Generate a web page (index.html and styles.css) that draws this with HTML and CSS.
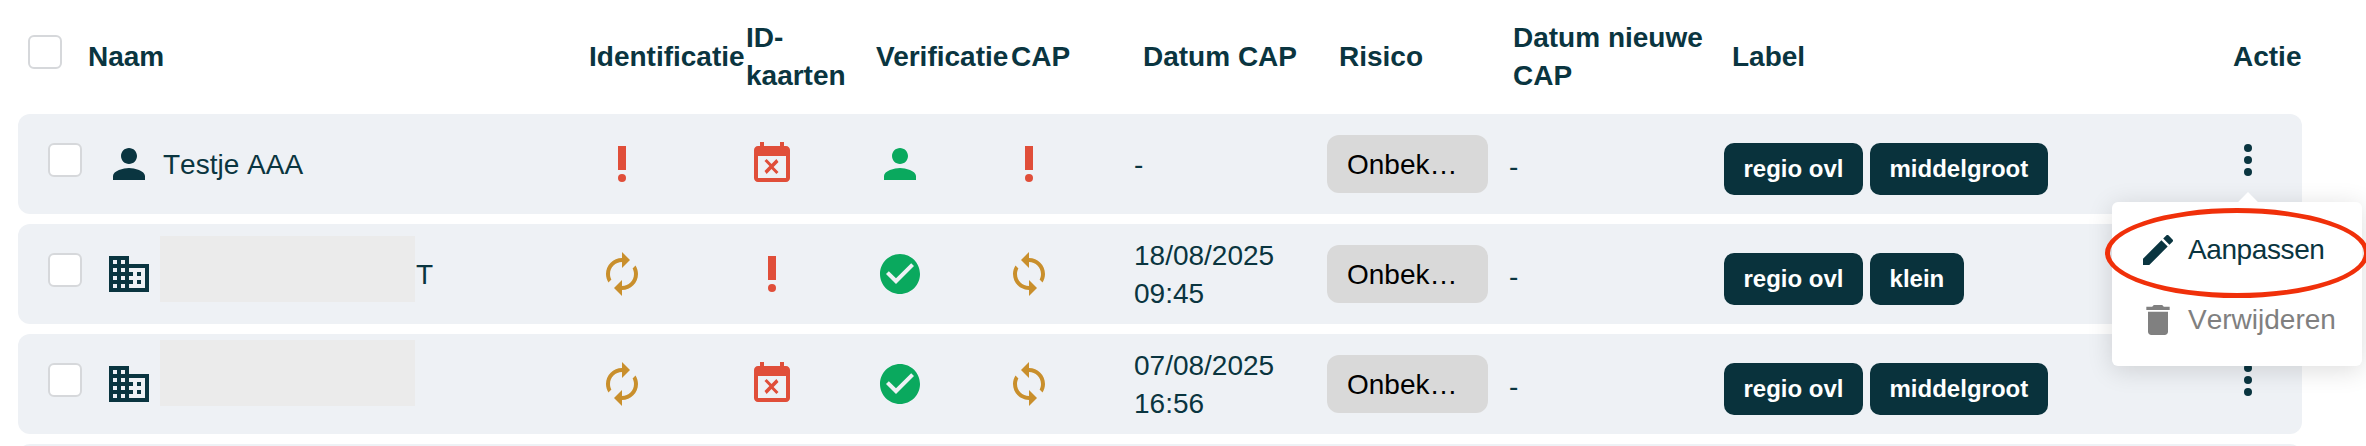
FILE: index.html
```html
<!DOCTYPE html>
<html lang="nl">
<head>
    <meta charset="UTF-8">
    <meta name="viewport" content="width=device-width, initial-scale=1.0">
    <title>Klanten</title>
    <link rel="stylesheet" href="styles.css">
</head>
<body>

    <!-- Material iconen, hergebruikt in de rijen -->
    <svg class="defs" aria-hidden="true">
        <symbol id="i-person" viewBox="0 0 24 24"><path d="M12 12c2.21 0 4-1.79 4-4s-1.79-4-4-4-4 1.79-4 4 1.79 4 4 4zm0 2c-2.67 0-8 1.34-8 4v2h16v-2c0-2.66-5.33-4-8-4z"/></symbol>
        <symbol id="i-domain" viewBox="0 0 24 24"><path d="M12 7V3H2v18h20V7H12zM6 19H4v-2h2v2zm0-4H4v-2h2v2zm0-4H4V9h2v2zm0-4H4V5h2v2zm4 12H8v-2h2v2zm0-4H8v-2h2v2zm0-4H8V9h2v2zm0-4H8V5h2v2zm10 12h-8v-2h2v-2h-2v-2h2v-2h-2V9h8v10zm-2-8h-2v2h2v-2zm0 4h-2v2h2v-2z"/></symbol>
        <symbol id="i-priority" viewBox="0 0 24 24"><circle cx="12" cy="19" r="2"/><path d="M10 3h4v12h-4z"/></symbol>
        <symbol id="i-busy" viewBox="0 0 24 24"><path d="M9.31 17l2.44-2.44L14.19 17l1.06-1.06-2.44-2.44 2.44-2.44L14.19 9.5l-2.44 2.44L9.31 9.5l-1.06 1.06 2.44 2.44-2.44 2.44L9.31 17zM19 3h-1V1h-2v2H8V1H6v2H5c-1.11 0-1.99.9-1.99 2L3 19c0 1.1.89 2 2 2h14c1.1 0 2-.9 2-2V5c0-1.1-.9-2-2-2zm0 16H5V8h14v11z"/></symbol>
        <symbol id="i-sync" viewBox="0 0 24 24"><path d="M12 4V1L8 5l4 4V6c3.31 0 6 2.69 6 6 0 1.01-.25 1.97-.7 2.8l1.46 1.46C19.54 15.03 20 13.57 20 12c0-4.42-3.58-8-8-8zm0 14c-3.31 0-6-2.69-6-6 0-1.01.25-1.97.7-2.8L5.24 7.74C4.46 8.97 4 10.43 4 12c0 4.42 3.58 8 8 8v3l4-4-4-4v3z"/></symbol>
        <symbol id="i-check" viewBox="0 0 24 24"><path d="M12 2C6.48 2 2 6.48 2 12s4.48 10 10 10 10-4.48 10-10S17.52 2 12 2zm-2 15l-5-5 1.41-1.41L10 14.17l7.59-7.59L19 8l-9 9z"/></symbol>
        <symbol id="i-more" viewBox="0 0 24 24"><circle cx="12" cy="6" r="2"/><circle cx="12" cy="12" r="2"/><circle cx="12" cy="18" r="2"/></symbol>
        <symbol id="i-edit" viewBox="0 0 24 24"><path d="M3 17.25V21h3.75L17.81 9.94l-3.75-3.75L3 17.25zM20.71 7.04c.39-.39.39-1.02 0-1.41l-2.34-2.34c-.39-.39-1.02-.39-1.41 0l-1.83 1.83 3.75 3.75 1.83-1.83z"/></symbol>
        <symbol id="i-delete" viewBox="0 0 24 24"><path d="M6 19c0 1.1.9 2 2 2h8c1.1 0 2-.9 2-2V7H6v12zM19 4h-3.5l-1-1h-5l-1 1H5v2h14V4z"/></symbol>
    </svg>

    <div class="table">
        <div class="grid header">
            <div class="name-cell"><span class="checkbox"></span><span class="naam">Naam</span></div>
            <div>Identificatie</div>
            <div>ID-kaarten</div>
            <div class="nowrap">Verificatie</div>
            <div class="h-cap">CAP</div>
            <div class="h-date">Datum CAP</div>
            <div class="h-risk">Risico</div>
            <div class="h-new">Datum nieuwe CAP</div>
            <div class="h-label">Label</div>
            <div>Actie</div>
        </div>

        <div class="grid row">
            <div class="name-cell">
                <span class="checkbox"></span>
                <svg class="icon dark"><use href="#i-person"/></svg>
                <span class="name">Testje AAA</span>
            </div>
            <div class="c-ident"><svg class="icon red"><use href="#i-priority"/></svg></div>
            <div class="c-id"><svg class="icon red"><use href="#i-busy"/></svg></div>
            <div><svg class="icon green"><use href="#i-person"/></svg></div>
            <div><svg class="icon red"><use href="#i-priority"/></svg></div>
            <div class="date">-</div>
            <div><span class="risk">Onbek…</span></div>
            <div class="dash">-</div>
            <div class="tags"><span class="tag">regio ovl</span><span class="tag">middelgroot</span></div>
            <div class="c-action"><svg class="icon dark"><use href="#i-more"/></svg></div>
        </div>

        <div class="grid row">
            <div class="name-cell">
                <span class="checkbox"></span>
                <svg class="icon dark"><use href="#i-domain"/></svg>
                <span class="redact"></span>
                <span class="name-rest">T</span>
            </div>
            <div class="c-ident"><svg class="icon amber flip"><use href="#i-sync"/></svg></div>
            <div class="c-id"><svg class="icon red"><use href="#i-priority"/></svg></div>
            <div><svg class="icon green"><use href="#i-check"/></svg></div>
            <div><svg class="icon amber"><use href="#i-sync"/></svg></div>
            <div class="date">18/08/2025<br>09:45</div>
            <div><span class="risk">Onbek…</span></div>
            <div class="dash">-</div>
            <div class="tags"><span class="tag">regio ovl</span><span class="tag">klein</span></div>
            <div class="c-action"><svg class="icon dark"><use href="#i-more"/></svg></div>
        </div>

        <div class="grid row">
            <div class="name-cell">
                <span class="checkbox"></span>
                <svg class="icon dark"><use href="#i-domain"/></svg>
                <span class="redact high"></span>
            </div>
            <div class="c-ident"><svg class="icon amber flip"><use href="#i-sync"/></svg></div>
            <div class="c-id"><svg class="icon red"><use href="#i-busy"/></svg></div>
            <div><svg class="icon green"><use href="#i-check"/></svg></div>
            <div><svg class="icon amber"><use href="#i-sync"/></svg></div>
            <div class="date">07/08/2025<br>16:56</div>
            <div><span class="risk">Onbek…</span></div>
            <div class="dash">-</div>
            <div class="tags"><span class="tag">regio ovl</span><span class="tag">middelgroot</span></div>
            <div class="c-action"><svg class="icon dark"><use href="#i-more"/></svg></div>
        </div>

        <div class="grid row"></div>
    </div>

    <div class="menu">
        <div class="menu-item edit"><svg class="menu-icon"><use href="#i-edit"/></svg>Aanpassen</div>
        <div class="menu-item disabled"><svg class="menu-icon"><use href="#i-delete"/></svg>Verwijderen</div>
    </div>
    <div class="circle"></div>

</body>
</html>
```

FILE: styles.css
```css
/* basis */
html, body {
    height: 446px;
}

body {
    font-family: 'Liberation Sans', Arial, sans-serif;
    font-size: 28px;
    line-height: 38px;
    color: #0a3540;
    background-color: #fff;
    margin: 0;
    overflow: hidden;
    position: relative;
}

.defs {
    display: none;
}

/* tabel */
.table {
    width: 2284px;
    height: 446px;
    margin-left: 18px;
    overflow: hidden;
}

.grid {
    display: grid;
    grid-template-columns: 571px 157px 130px 129px 129px 193px 182px 215px 509px 69px;
    align-items: center;
}

.header {
    height: 114px;
    font-weight: bold;
}

.header .checkbox {
    margin: 0 26px 10px 10px;
}

.nowrap {
    white-space: nowrap;
}

.h-cap {
    padding-left: 6px;
}

.h-date {
    padding-left: 9px;
}

.h-risk {
    padding-left: 12px;
}

.h-new {
    padding-left: 4px;
}

.h-label {
    padding-left: 8px;
}

.row {
    height: 100px;
    margin-bottom: 10px;
    background-color: #eef1f5;
    border-radius: 12px;
}

.name-cell {
    display: flex;
    align-items: center;
}

.row .checkbox {
    margin: 0 23px 8px 30px;
}

.checkbox {
    flex: none;
    width: 34px;
    height: 34px;
    box-sizing: border-box;
    background-color: #fff;
    border: 2px solid #d6d8db;
    border-radius: 6px;
}

.name {
    margin-left: 10px;
    padding-top: 2px;
    font-kerning: none;
}

.redact {
    flex: none;
    width: 255px;
    height: 66px;
    margin: 0 0 10px 7px;
    background-color: #ebebeb;
}

.redact.high {
    margin-bottom: 22px;
}

.name-rest {
    margin-left: 1px;
    padding-top: 2px;
}

/* iconen */
.icon {
    display: block;
    width: 48px;
    height: 48px;
}

.dark {
    fill: #0a3540;
}

.red {
    fill: #e04e39;
}

.green {
    fill: #0aa95e;
}

.amber {
    fill: #c98f2c;
}

.flip {
    transform: scaleX(-1);
}

.c-ident {
    padding-left: 9px;
}

.c-id {
    padding-left: 2px;
}

.c-action {
    margin-left: -9px;
    padding-bottom: 8px;
}

.date {
    padding-top: 2px;
}

.dash {
    padding-top: 6px;
}

/* risico knop */
.risk {
    display: block;
    width: 161px;
    height: 58px;
    box-sizing: border-box;
    padding: 11px 20px;
    color: #000;
    background-color: #d9d9d9;
    border-radius: 12px;
}

/* labels */
.tags {
    display: flex;
    gap: 7px;
    margin-top: 10px;
}

.tag {
    height: 52px;
    padding: 0 19.5px;
    font-size: 24px;
    font-weight: bold;
    line-height: 52px;
    color: #fff;
    background-color: #09323c;
    border-radius: 10px;
}

/* menu */
.menu {
    position: absolute;
    left: 2112px;
    top: 202px;
    width: 250px;
    height: 164px;
    padding: 13px 0 0 26px;
    box-sizing: border-box;
    background-color: #fff;
    border-radius: 6px;
    box-shadow: 0 4px 26px rgba(0, 0, 0, 0.14);
}

.menu::before {
    content: '';
    position: absolute;
    left: 129px;
    top: -7px;
    width: 14px;
    height: 14px;
    background-color: #fff;
    transform: rotate(45deg);
}

.menu-item {
    position: relative;
    display: flex;
    align-items: center;
    gap: 10px;
    height: 70px;
}

.edit {
    letter-spacing: -0.4px;
}

.menu-icon {
    width: 40px;
    height: 40px;
    fill: #0a3540;
}

.disabled {
    color: #808080;
    font-kerning: none;
}

.disabled .menu-icon {
    fill: #808080;
}

/* rode markering rond Aanpassen */
.circle {
    position: absolute;
    left: 2105px;
    top: 208px;
    width: 264px;
    height: 90px;
    box-sizing: border-box;
    border: 5px solid #f0300a;
    border-radius: 50%;
}
```
